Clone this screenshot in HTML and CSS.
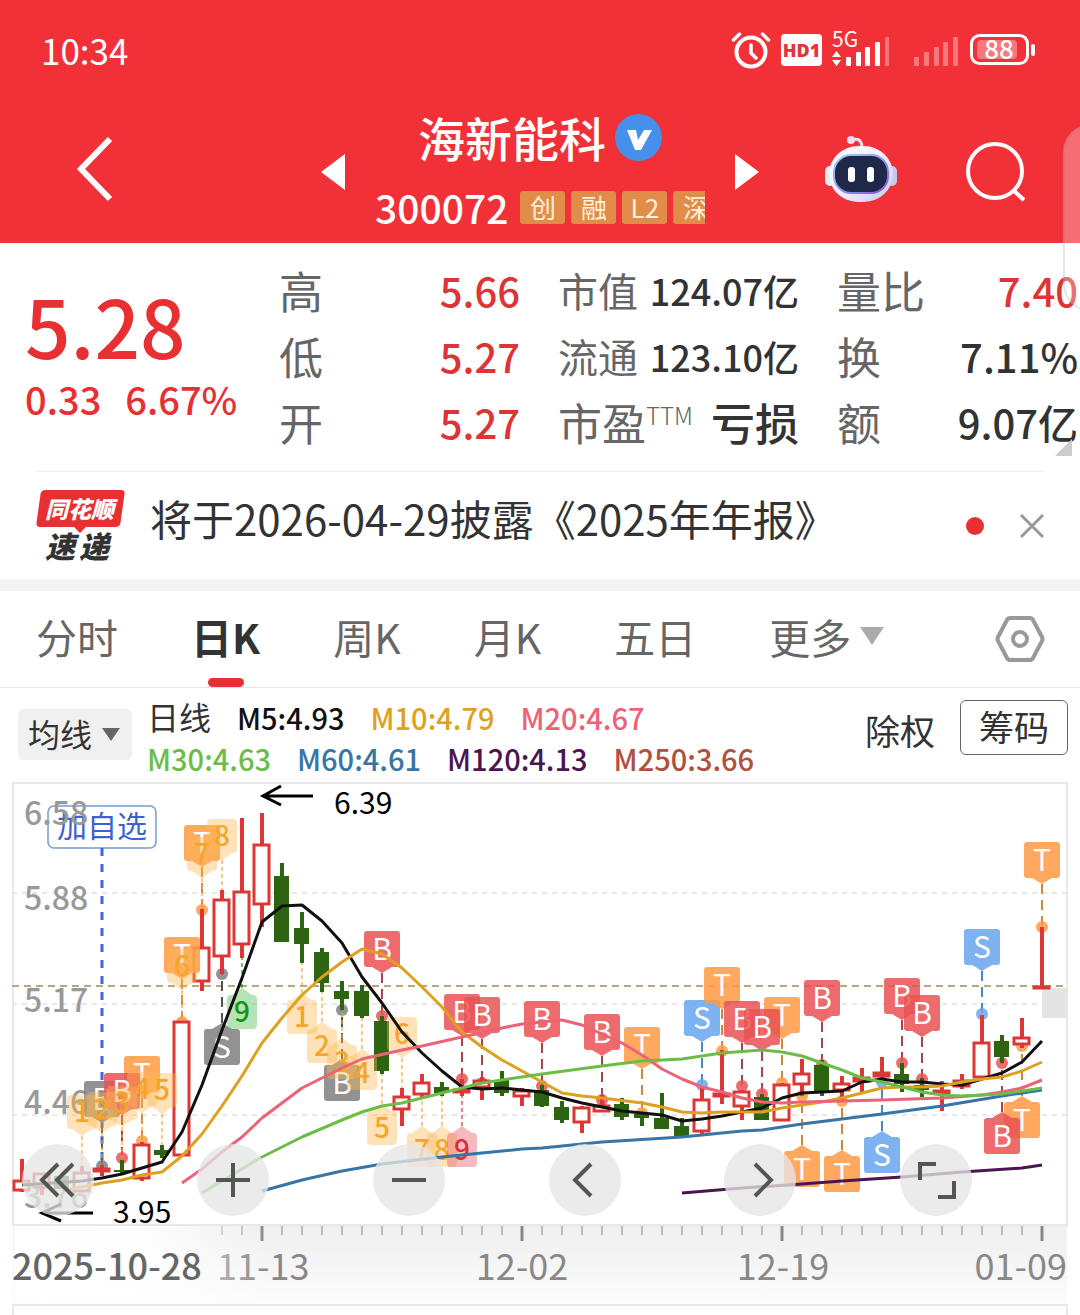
FILE: index.html
```
<!DOCTYPE html>
<html lang="zh-CN">
<head>
  <meta charset="UTF-8">
  <meta name="viewport" content="width=device-width, initial-scale=1.0">
  <title>海新能科 300072</title>
  <link rel="stylesheet" href="styles.css">
</head>
<body>
  <div class="page">
    <header class="header">
      <div class="status">
        <span class="time">10:34</span>
        <div class="status-icons">
          <svg width="40" height="38" viewBox="0 0 40 38" fill="none" stroke="#fff" stroke-width="4" stroke-linecap="round">
            <circle cx="20" cy="21" r="14.5"/>
            <path d="M20 14v8l5 5M2.500 9l6-6M37.500 9l-6-6" stroke-width="3.500"/>
          </svg>
          <span class="hd">HD1</span>
          <svg width="58" height="36" viewBox="0 0 58 36" fill="#fff">
            <text x="0" y="15" font-size="21">5G</text>
            <path d="M0 25l4.500-6 4.500 6zM0 28l4.500 6 4.500-6z"/>
            <rect x="14" y="25" width="5" height="9" rx="1"/>
            <rect x="24" y="20" width="5" height="14" rx="1"/>
            <rect x="33" y="15" width="5" height="19" rx="1"/>
            <rect x="43" y="10" width="5" height="24" rx="1"/>
            <rect x="53" y="5" width="4" height="29" rx="1" opacity=".35"/>
          </svg>
          <svg class="sim2" width="46" height="36" viewBox="0 0 46 36" fill="#fff" opacity=".35">
            <rect x="0" y="25" width="5" height="9" rx="1"/>
            <rect x="10" y="20" width="5" height="14" rx="1"/>
            <rect x="20" y="15" width="5" height="19" rx="1"/>
            <rect x="29" y="10" width="5" height="24" rx="1"/>
            <rect x="39" y="5" width="5" height="29" rx="1"/>
          </svg>
          <svg width="65" height="32" viewBox="0 0 65 32" fill="#fff">
            <rect x="1.500" y="1.500" width="56" height="28" rx="8" fill="none" stroke="#fff" stroke-width="3"/>
            <rect x="7" y="6" width="40" height="19" rx="4" opacity=".35"/>
            <rect x="61" y="10" width="4" height="12" rx="2"/>
            <text x="29" y="25" font-size="26" font-weight="500" text-anchor="middle">88</text>
          </svg>
        </div>
      </div>
      <div class="title-bar">
        <button class="icon-btn back" aria-label="返回">
          <svg width="40" height="72" viewBox="0 0 40 72" fill="none" stroke="#fff" stroke-width="6"><path d="M35 3L6 33l29 30"/></svg>
        </button>
        <div class="stock">
          <button class="icon-btn" aria-label="上一只">
            <svg width="24" height="36" viewBox="0 0 24 36" fill="#fff"><path d="M0 18L24 0v36z"/></svg>
          </button>
          <div class="stock-info">
            <h1>海新能科
              <svg width="47" height="47" viewBox="0 0 47 47"><circle cx="23.500" cy="23.500" r="23.500" fill="#468fea"/><path d="M12 16h9l2 10 6-10h8L26 36h-6z" fill="#fff"/></svg>
            </h1>
            <div class="code"><span class="number">300072</span><span class="tag">创</span><span class="tag">融</span><span class="tag">L2</span><span class="tag">深</span></div>
          </div>
          <button class="icon-btn" aria-label="下一只">
            <svg width="24" height="36" viewBox="0 0 24 36" fill="#fff"><path d="M24 18L0 0v36z"/></svg>
          </button>
        </div>
        <div class="actions">
          <button class="icon-btn" aria-label="智能助手">
            <svg width="72" height="72" viewBox="0 0 72 72">
              <defs>
                <linearGradient id="shell" x1="0" y1="0" x2="1" y2="1"><stop offset="0" stop-color="#fff"/><stop offset=".6" stop-color="#eceafa"/><stop offset="1" stop-color="#c3c5ea"/></linearGradient>
                <linearGradient id="rim" x1="0" y1="0" x2="1" y2="1"><stop offset="0" stop-color="#9fd6f4"/><stop offset="1" stop-color="#8054d8"/></linearGradient>
              </defs>
              <path d="M27 4q10-3 10 8" fill="none" stroke="#f3dff0" stroke-width="3"/>
              <circle cx="26" cy="4" r="4" fill="#f5dcec"/>
              <rect x="0" y="30" width="10" height="20" rx="5" fill="#e4ecfb"/>
              <rect x="62" y="30" width="10" height="20" rx="5" fill="#c5c9ee"/>
              <rect x="4" y="10" width="64" height="56" rx="29" fill="url(#shell)"/>
              <rect x="9" y="19" width="54" height="38" rx="17" fill="#1f2849" stroke="url(#rim)" stroke-width="2"/>
              <rect x="23" y="31" width="7" height="15" rx="3" fill="#fff"/>
              <rect x="42" y="31" width="7" height="15" rx="3" fill="#fff"/>
            </svg>
          </button>
          <button class="icon-btn" aria-label="搜索">
            <svg width="62" height="62" viewBox="0 0 62 62" fill="none" stroke="#fff" stroke-width="4"><circle cx="30" cy="30" r="27"/><path d="M48 49l11 10"/></svg>
          </button>
        </div>
      </div>
    </header>
    <div class="edge-panel"></div>

    <section class="quote">
      <div class="price">
        <div class="last">5.28</div>
        <div class="change"><span>0.33</span><span>6.67%</span></div>
      </div>
      <dl class="stats">
        <div><dt>高</dt><dd class="up">5.66</dd></div>
        <div><dt>低</dt><dd class="up">5.27</dd></div>
        <div><dt>开</dt><dd class="up">5.27</dd></div>
      </dl>
      <dl class="stats">
        <div class="compact"><dt>市值</dt><dd>124.07亿</dd></div>
        <div class="compact"><dt>流通</dt><dd>123.10亿</dd></div>
        <div><dt>市盈<sup>TTM</sup></dt><dd class="large">亏损</dd></div>
      </dl>
      <dl class="stats">
        <div><dt>量比</dt><dd class="up">7.40</dd></div>
        <div><dt>换</dt><dd>7.11%</dd></div>
        <div><dt>额</dt><dd>9.07亿</dd></div>
      </dl>
      <span class="corner"></span>
    </section>

    <section class="notice">
      <svg class="logo" width="90" height="74" viewBox="0 0 90 74">
        <path d="M9 1h76q4 0 3.500 4l-4 29q-1 4-5 4H50l-6 6-6-6H4q-4 0-3.500-4l4-29q1-4 4.500-4z" fill="#e83032"/>
        <text x="9" y="29" class="logo-top">同花顺</text>
        <text x="9 43" y="69" class="logo-bottom">速递</text>
      </svg>
      <a href="#report">将于2026-04-29披露《2025年年报》</a>
      <span class="dot"></span>
      <button class="icon-btn" aria-label="关闭">
        <svg width="24" height="24" viewBox="0 0 24 24" stroke="#999" stroke-width="3"><path d="M1 1l22 22M23 1L1 23"/></svg>
      </button>
    </section>

    <nav class="tabs">
      <button>分时</button>
      <button class="active">日K</button>
      <button>周K</button>
      <button>月K</button>
      <button>五日</button>
      <button class="more">更多</button>
      <button class="settings" aria-label="设置">
        <svg width="48" height="48" viewBox="0 0 48 48" fill="none" stroke="#999" stroke-width="4" stroke-linejoin="round"><path d="M14 3h20q2 0 3 2l9 17q1 2 0 4l-9 17q-1 2-3 2H14q-2 0-3-2L2 26q-1-2 0-4l9-17q1-2 3-2z"/><circle cx="24" cy="24" r="7"/></svg>
      </button>
    </nav>

    <section class="indicators">
      <label class="picker">
        <select aria-label="指标"><option>均线</option></select>
      </label>
      <div class="ma">
        <div><span class="period">日线</span><span class="m5">M5:4.93</span><span class="m10">M10:4.79</span><span class="m20">M20:4.67</span></div>
        <div><span class="m30">M30:4.63</span><span class="m60">M60:4.61</span><span class="m120">M120:4.13</span><span class="m250">M250:3.66</span></div>
      </div>
      <button class="adjust">除权</button>
      <button class="chips">筹码</button>
    </section>

    <section class="chart">
      <svg id="kline" viewBox="0 782 1080 533"></svg>
      <div class="tools">
        <button aria-label="最左"><svg viewBox="0 0 72 72"><path d="M36 20L20 36l16 16M51 20L35 36l16 16"/></svg></button>
        <button aria-label="放大"><svg viewBox="0 0 72 72"><path d="M36 19v34M19 36h34"/></svg></button>
        <button aria-label="缩小"><svg viewBox="0 0 72 72"><path d="M19 36h34"/></svg></button>
        <button aria-label="左移"><svg viewBox="0 0 72 72"><path d="M42 20L26 36l16 16"/></svg></button>
        <button aria-label="右移"><svg viewBox="0 0 72 72"><path d="M31 20l16 16-16 16"/></svg></button>
        <button aria-label="全屏"><svg viewBox="0 0 72 72"><path d="M20 36V20h16M54 37v16H38"/></svg></button>
      </div>
    </section>
  </div>
  <script src="chart.js"></script>
</body>
</html>
```
FILE: styles.css
```
* {
  box-sizing: border-box;
}
body {
  margin: 0;
  background: #fff;
  color: #333;
  font-family: "Noto Sans CJK SC", "Noto Sans", sans-serif;
}
button, select {
  font-family: inherit;
  color: inherit;
  background: none;
  border: none;
  padding: 0;
  margin: 0;
  cursor: pointer;
}
svg {
  display: block;
  flex: none;
  overflow: visible;
}
.page {
  position: relative;
  overflow: hidden;
}
.icon-btn {
  display: block;
  flex: none;
}

/* header */
.header {
  background: #f23037;
  color: #fff;
}
.status {
  display: flex;
  align-items: center;
  justify-content: space-between;
  height: 100px;
  padding: 0 45px 0 41px;
}
.time {
  font-size: 35px;
  line-height: 52px;
}
.status-icons {
  display: flex;
  align-items: center;
  gap: 10px;
}
.hd {
  width: 41px;
  height: 32px;
  border-radius: 4px;
  background: #fff;
  color: #e0353a;
  font: 900 18px/32px "Noto Sans", sans-serif;
  text-align: center;
}
.sim2 {
  margin-left: 14px;
}
.title-bar {
  display: grid;
  grid-template-columns: 1fr auto 1fr;
  align-items: center;
  height: 143px;
}
.back {
  margin-left: 75px;
  justify-self: start;
}
.stock {
  display: flex;
  align-items: center;
  gap: 30px;
}
.stock-info {
  width: 330px;
  overflow: hidden;
}
.stock-info h1 {
  display: flex;
  align-items: center;
  justify-content: center;
  gap: 9px;
  margin: 0 0 15px;
  font-size: 47px;
  font-weight: 500;
  line-height: 56px;
}
.code {
  display: flex;
  align-items: center;
  gap: 6px;
  height: 54px;
}
.number {
  margin-right: 6px;
  font-size: 39px;
  font-weight: 500;
}
.tag {
  flex: none;
  width: 45px;
  height: 33px;
  border-radius: 3px;
  background: #e28c4a;
  color: #fff0d8;
  font-size: 26px;
  line-height: 31px;
  text-align: center;
}
.actions {
  display: flex;
  align-items: center;
  justify-content: flex-end;
  gap: 68px;
  padding-right: 53px;
}
.edge-panel {
  position: absolute;
  top: 124px;
  right: -40px;
  width: 57px;
  height: 188px;
  border: 2px solid rgba(120, 120, 120, 0.2);
  border-radius: 30px;
  background: rgba(255, 255, 255, 0.3);
  z-index: 1;
}

/* quote */
.quote {
  position: relative;
  display: grid;
  grid-template-columns: 216px 1fr 1fr 1fr;
  gap: 38px;
  padding: 14px 2px 16px 25px;
}
.price {
  color: #e83032;
  font-weight: 500;
  white-space: nowrap;
}
.last {
  font-size: 80px;
  line-height: 134px;
}
.change {
  display: flex;
  gap: 24px;
  font-size: 38px;
  line-height: 16px;
}
.stats {
  margin: 0;
}
.stats div {
  display: flex;
  justify-content: space-between;
  height: 66px;
  line-height: 66px;
  font-size: 44px;
  white-space: nowrap;
}
.stats dt {
  color: #666;
}
.stats dd {
  margin: 0;
  font-size: 40px;
  font-weight: 500;
}
.stats .compact {
  font-size: 40px;
}
.stats .compact dd {
  font-size: 36px;
}
.stats .large {
  font-size: 44px;
}
.stats sup {
  font-size: 24px;
  font-weight: 300;
  line-height: 0;
}
.stats .up {
  color: #dd3436;
}
.corner {
  position: absolute;
  right: 8px;
  bottom: 15px;
  border-left: 17px solid transparent;
  border-bottom: 17px solid #ccc;
}

/* notice */
.notice {
  display: flex;
  align-items: center;
  height: 108px;
  margin: 0 36px;
  border-top: 1px solid #eee;
}
.notice a {
  flex: 1;
  margin-left: 24px;
  color: #333;
  font-size: 42px;
  line-height: 92px;
  height: 108px;
  text-decoration: none;
  white-space: nowrap;
}
.logo-top, .logo-bottom {
  font-style: italic;
  font-weight: 900;
}
.logo-top {
  fill: #fff;
  font-size: 23px;
}
.logo-bottom {
  fill: #333;
  font-size: 30px;
}
.dot {
  width: 18px;
  height: 18px;
  margin-right: 36px;
  border-radius: 50%;
  background: #e83032;
}

/* tabs */
.tabs {
  display: flex;
  align-items: center;
  gap: 73px;
  height: 109px;
  padding: 0 36px;
  border-top: 12px solid #f4f4f4;
  border-bottom: 1px solid #e6e6e6;
  color: #666;
}
.tabs button {
  position: relative;
  height: 96px;
  padding-bottom: 6px;
  font-size: 41px;
  white-space: nowrap;
}
.tabs .active {
  color: #333;
  font-weight: 700;
}
.tabs .active::after {
  content: "";
  position: absolute;
  left: 50%;
  bottom: 0;
  width: 36px;
  height: 9px;
  margin-left: -18px;
  border-radius: 5px;
  background: #e83032;
}
.tabs .more {
  display: flex;
  align-items: center;
  gap: 9px;
}
.tabs .more::after {
  content: "";
  border: 12px solid transparent;
  border-top: 18px solid #aaa;
  border-bottom: 0;
}
.tabs .settings {
  margin-left: auto;
  padding: 0;
}

/* indicators */
.indicators {
  display: flex;
  align-items: flex-start;
  height: 94px;
  padding: 8px 12px 0 18px;
}
.picker {
  position: relative;
  margin-top: 13px;
}
.picker select {
  display: block;
  width: 114px;
  height: 51px;
  padding: 0 10px 4px;
  border-radius: 6px;
  background: #f0f0f0;
  font-size: 32px;
  appearance: none;
}
.picker::after {
  content: "";
  position: absolute;
  right: 12px;
  top: 19px;
  border: 9px solid transparent;
  border-top: 13px solid #666;
  border-bottom: 0;
  pointer-events: none;
}
.ma {
  flex: 1;
  margin-left: 15px;
  font-size: 29px;
  font-weight: 500;
  line-height: 42px;
}
.ma div {
  display: flex;
  gap: 26px;
  height: 41px;
  white-space: nowrap;
}
.period {
  font-size: 32px;
  font-weight: 400;
  line-height: 40px;
}
.m5 { color: #111; }
.m10 { color: #e0a020; }
.m20 { color: #ec6377; }
.m30 { color: #6cbd48; }
.m60 { color: #3675a6; }
.m120 { color: #4b164f; }
.m250 { color: #b0503e; }
.adjust, .chips {
  height: 55px;
  margin-top: 4px;
  padding-bottom: 4px;
  font-size: 35px;
  line-height: 50px;
}
.adjust {
  margin: 8px 25px 0 0;
}
.chips {
  width: 108px;
  border: 1px solid #666;
  border-radius: 6px;
}

/* chart */
.chart {
  position: relative;
}
.chart > svg {
  width: 100%;
}
.tools {
  position: absolute;
  left: 2%;
  right: 10%;
  top: 68%;
  display: flex;
  justify-content: space-between;
}
.tools button {
  width: 72px;
  height: 72px;
  border-radius: 50%;
  background: rgba(230, 230, 230, 0.78);
}
.tools path {
  fill: none;
  stroke: #555;
  stroke-width: 4;
}
.ma-line {
  fill: none;
  stroke-width: 3;
  stroke-linejoin: round;
}
.price-label {
  fill: #999;
  font-size: 32px;
  font-weight: 500;
}
.date-label {
  fill: #888;
  font-size: 36px;
}
.date-label.first {
  fill: #666;
  font-weight: 500;
}
.note {
  fill: #000;
  font-size: 30px;
}
.flag {
  fill: #fff;
  font-size: 30px;
  text-anchor: middle;
}
.count {
  font-size: 28px;
  font-weight: 500;
  text-anchor: middle;
}
.watch {
  fill: #3b62cf;
  font-size: 30px;
  text-anchor: middle;
}
```
FILE: chart.js
```
const svg = document.getElementById('kline');
const STEP = 20;
const FIRST = 22;
const RED = '#dc3636';
const GREEN = '#2c6412';

// [colour, high, body top, body bottom, low]
const candles = [
  ['r', 1159, 1181, 1190, 1192], ['r', 1173, 1174, 1187, 1195], ['g', 1176, 1176, 1189, 1189],
  ['r', 1166, 1173, 1191, 1192], ['r', 1165, 1169, 1171, 1176], ['g', 1160, 1170, 1172, 1174],
  ['r', 1142, 1145, 1178, 1181], ['g', 1145, 1150, 1155, 1158], ['r', 1021, 1022, 1155, 1156],
  ['r', 909, 948, 981, 991], ['r', 890, 900, 956, 974], ['r', 818, 892, 944, 958],
  ['r', 813, 845, 904, 927], ['g', 863, 876, 942, 942], ['g', 912, 928, 944, 963],
  ['g', 948, 952, 983, 992], ['g', 981, 991, 999, 1010], ['g', 985, 991, 1016, 1018],
  ['g', 1016, 1021, 1071, 1074], ['r', 1088, 1097, 1109, 1126], ['r', 1074, 1083, 1094, 1097],
  ['g', 1082, 1087, 1093, 1096], ['r', 1079, 1090, 1092, 1096], ['r', 1077, 1081, 1087, 1100],
  ['g', 1071, 1080, 1093, 1096], ['r', 1088, 1091, 1096, 1106], ['g', 1085, 1090, 1106, 1107],
  ['g', 1101, 1107, 1120, 1123], ['r', 1106, 1108, 1122, 1133], ['r', 1095, 1106, 1111, 1112],
  ['g', 1098, 1104, 1117, 1120], ['g', 1112, 1114, 1118, 1126], ['g', 1093, 1118, 1129, 1129],
  ['g', 1118, 1126, 1136, 1137], ['r', 1088, 1100, 1131, 1134], ['r', 1050, 1094, 1096, 1104],
  ['r', 1090, 1092, 1106, 1120], ['g', 1094, 1097, 1120, 1120], ['r', 1083, 1085, 1120, 1121],
  ['r', 1059, 1074, 1084, 1096], ['g', 1060, 1065, 1091, 1096], ['r', 1076, 1084, 1090, 1100],
  ['r', 1068, 1078, 1081, 1092], ['r', 1057, 1073, 1076, 1079], ['g', 1063, 1074, 1084, 1092],
  ['g', 1078, 1085, 1090, 1097], ['r', 1081, 1091, 1093, 1111], ['r', 1074, 1081, 1086, 1089],
  ['r', 1015, 1043, 1077, 1078], ['g', 1035, 1041, 1057, 1063], ['r', 1018, 1038, 1044, 1048],
  ['r', 927, 987, 988, 988]
];

const averages = [
  ['#4b164f', '682,1193 742,1188 802,1184 842,1181 902,1177 962,1172 1022,1168 1042,1165'],
  ['#3675a6', '262,1191 302,1180 342,1171 382,1164 442,1157 482,1153 522,1149 542,1148 602,1142 682,1137 742,1131 762,1130 802,1124 842,1119 882,1114 942,1106 1002,1096 1042,1090'],
  ['#111', '22,1185 82,1181 102,1178 122,1174 142,1168 162,1162 182,1132 202,1085 222,1030 242,978 262,922 282,906 302,905 322,921 342,943 362,977 382,1003 402,1032 422,1053 442,1071 462,1087 482,1089 502,1088 522,1090 542,1092 562,1098 582,1103 602,1107 622,1111 642,1113 662,1115 682,1121 702,1119 722,1116 742,1112 762,1108 782,1098 802,1093 822,1092 842,1091 862,1082 882,1079 902,1082 922,1082 942,1084 962,1085 982,1079 1002,1073 1022,1062 1042,1041'],
  ['#dfa01f', '62,1191 102,1183 122,1180 142,1175 162,1172 182,1156 202,1134 222,1106 242,1076 262,1043 282,1018 302,995 322,977 342,962 362,949 382,954 402,968 422,987 442,1007 462,1032 482,1047 502,1060 522,1071 542,1082 562,1093 582,1096 602,1098 642,1103 662,1107 682,1112 702,1113 722,1112 762,1112 782,1108 802,1105 822,1102 842,1098 862,1093 882,1088 902,1087 922,1087 942,1086 962,1082 982,1079 1002,1077 1022,1071 1042,1062'],
  ['#ec6377', '182,1183 202,1169 222,1152 242,1137 262,1118 302,1088 342,1068 362,1059 402,1050 422,1046 462,1037 502,1028 522,1024 562,1020 582,1025 602,1034 622,1043 642,1055 662,1069 682,1079 702,1087 722,1092 742,1098 762,1102 782,1103 802,1102 842,1101 882,1100 942,1098 982,1095 1002,1092 1022,1088 1042,1080'],
  ['#6cbd48', '202,1193 262,1157 302,1137 342,1120 362,1112 382,1106 402,1103 442,1093 482,1083 542,1074 602,1066 642,1061 682,1059 722,1053 762,1050 782,1052 802,1056 822,1063 842,1070 862,1078 882,1082 902,1087 922,1092 942,1095 962,1096 1002,1094 1042,1088']
];

// [x, letter, flag top, dot y, colour]
const flags = [
  [102, 'B', 1081, 1166, 'gray'], [142, 'T', 1056, 1141, 'orange'], [122, 'B', 1073, 1158, 'red'],
  [182, 'T', 937, 1022, 'orange'], [202, 'T', 825, 910, 'orange'], [222, 'S', 1029, 974, 'gray'],
  [342, 'B', 1065, 1010, 'gray'], [382, 'B', 931, 1016, 'red'], [462, 'B', 994, 1079, 'red'],
  [482, 'B', 997, 1083, 'red'], [542, 'B', 1001, 1086, 'red'], [602, 'B', 1014, 1100, 'red'],
  [642, 'T', 1027, 1113, 'orange'], [702, 'S', 1000, 1085, 'blue'], [722, 'T', 967, 1051, 'orange'],
  [782, 'T', 997, 1083, 'orange'], [742, 'B', 1001, 1086, 'red'], [762, 'B', 1009, 1094, 'red'],
  [802, 'T', 1151, 1096, 'orange'], [822, 'B', 980, 1065, 'red'], [842, 'T', 1156, 1101, 'orange'],
  [882, 'S', 1137, 1082, 'blue'], [902, 'B', 978, 1063, 'red'], [922, 'B', 995, 1079, 'red'],
  [982, 'S', 929, 1014, 'blue'], [1022, 'T', 1102, 1046, 'orange'], [1002, 'B', 1118, 1063, 'red'],
  [1042, 'T', 842, 927, 'orange']
];
const flagColors = {
  gray: ['#808080', '#555'],
  orange: ['#ff9a45', '#c98a3c'],
  red: ['#ea5254', '#a84448'],
  blue: ['#68a5ee', '#4a88c0']
};

// [x, number, centre y, candle end y, colour]
const counts = [
  [82, 1, 1112, 1166], [102, 2, 1109, 1160], [122, 3, 1103, 1158], [142, 4, 1089, 1142], [162, 5, 1090, 1145],
  [182, 6, 966, 1021], [202, 7, 854, 909], [222, 8, 836, 890], [242, 9, 1012, 958, 'green'],
  [302, 1, 1017, 963], [322, 2, 1046, 992], [342, 3, 1062, 1010], [362, 4, 1073, 1018], [382, 5, 1128, 1074],
  [402, 6, 1034, 1088], [422, 7, 1150, 1097], [442, 8, 1150, 1096], [462, 9, 1150, 1096, 'red']
];
const countColors = {
  orange: ['#ffb850', '#f5a52c'],
  green: ['#4cbb4c', '#129612'],
  red: ['#e85560', '#d8303c']
};

let out = `
  <defs>
    <linearGradient id="axis-bg" x1="0" y1="0" x2="0" y2="1"><stop offset="0" stop-color="#efefef"/><stop offset="1" stop-color="#fcfcfc"/></linearGradient>
    <linearGradient id="axis-fade"><stop offset="0" stop-color="#fff"/><stop offset=".5" stop-color="#fff" stop-opacity=".9"/><stop offset="1" stop-color="#fff" stop-opacity="0"/></linearGradient>
  </defs>
  <rect x="13" y="1226" width="1054" height="78" fill="url(#axis-bg)"/>
  <path d="M13 1225V783H1067V1225ZM13 1315V1305H1067V1315" fill="none" stroke="#e8e8e8" stroke-width="2"/>
  <path d="M12 893H1067M12 1004H1067M12 1115H1067" stroke="#e8e8e8" stroke-width="2" stroke-dasharray="5 5"/>
  <path d="M12 986H1067" stroke="#b9a77c" stroke-width="2" stroke-dasharray="7 5"/>
  <rect x="1042" y="988" width="26" height="30" fill="#e4e4e4"/>`;

// watchlist mark
out += `
  <rect x="48" y="806" width="108" height="42" rx="6" fill="#fff" stroke="#7a9ad2" stroke-width="1.500"/>
  <text x="102" y="837" class="watch">加自选</text>
  <path d="M102 848V1166" stroke="#4266d8" stroke-width="3" stroke-dasharray="8 8"/>`;

[['6.58', 825], ['5.88', 910], ['5.17', 1012], ['4.46', 1114], ['3.76', 1208]].forEach(([t, y]) => {
  out += `<text x="24" y="${y}" class="price-label">${t}</text>`;
});

// dashed tails and dots go under the candles
flags.forEach(([x, , top, dot, color]) => {
  const [fill, line] = flagColors[color];
  const end = top < dot ? top + 42 : top - 6;
  out += `<path d="M${x} ${end}V${dot}" stroke="${line}" stroke-width="2" stroke-dasharray="10 6"/>
    <circle cx="${x}" cy="${dot}" r="6" fill="${fill}" opacity=".85"/>`;
});

candles.forEach(([type, high, top, bottom, low], i) => {
  const x = FIRST + i * STEP;
  if (type === 'g') {
    out += `<path d="M${x} ${high}V${low}" stroke="${GREEN}" stroke-width="4"/>
      <rect x="${x - 8}" y="${top}" width="15" height="${bottom - top}" fill="${GREEN}"/>`;
  } else {
    out += `<path d="M${x} ${high}V${top}M${x} ${bottom}V${low}" stroke="${RED}" stroke-width="4"/>
      <rect x="${x - 8}" y="${top}" width="15" height="${bottom - top}" fill="#fff" stroke="${RED}" stroke-width="3"/>`;
  }
});

flags.forEach(([x, letter, top, dot, color]) => {
  const tip = top < dot
    ? `M${x - 10} ${top + 36}l10 6 10-6z`
    : `M${x - 10} ${top}l10-6 10 6z`;
  out += `<g fill="${flagColors[color][0]}" opacity=".85"><rect x="${x - 18}" y="${top}" width="36" height="36" rx="3"/><path d="${tip}"/></g>
    <text x="${x}" y="${top + 29}" class="flag">${letter}</text>`;
});

counts.forEach(([x, n, y, end, color = 'orange']) => {
  const [fill, ink] = countColors[color];
  const above = y < end;
  const tip = above ? `M${x - 10} ${y + 17}l10 7 10-7z` : `M${x - 10} ${y - 17}l10-7 10 7z`;
  out += `<path d="M${x} ${above ? y + 24 : y - 24}V${end}" stroke="${ink}" stroke-width="2" stroke-dasharray="4 3" opacity=".6"/>
    <g fill="${fill}" opacity=".4"><rect x="${x - 15}" y="${y - 17}" width="30" height="34" rx="4"/><path d="${tip}"/></g>
    <text x="${x}" y="${y + 10}" class="count" fill="${ink}">${n}</text>`;
});

averages.forEach(([color, points]) => {
  out += `<polyline class="ma-line" stroke="${color}" points="${points}"/>`;
});

// high / low notes
out += `
  <path d="M313 796H263M281 786L263 796L281 805M93 1213H42M61 1204L42 1213L61 1221" fill="none" stroke="#000" stroke-width="3"/>
  <text x="334" y="814" class="note">6.39</text>
  <text x="113" y="1223" class="note">3.95</text>`;

// time axis
for (let x = 222; x <= 1042; x += STEP) {
  const major = (x - 262) % 260 === 0;
  out += `<path d="M${x} 1226V${major ? 1241 : 1235}" stroke="#888" stroke-width="${major ? 3 : 1}"/>`;
}
out += `
  <text x="217" y="1280" class="date-label">11-13</text>
  <text x="522" y="1280" class="date-label" text-anchor="middle">12-02</text>
  <text x="783" y="1280" class="date-label" text-anchor="middle">12-19</text>
  <text x="1067" y="1280" class="date-label" text-anchor="end">01-09</text>
  <rect x="14" y="1226" width="256" height="77" fill="url(#axis-fade)"/>
  <text x="12" y="1280" class="date-label first">2025-10-28</text>`;

svg.innerHTML = out;
```
